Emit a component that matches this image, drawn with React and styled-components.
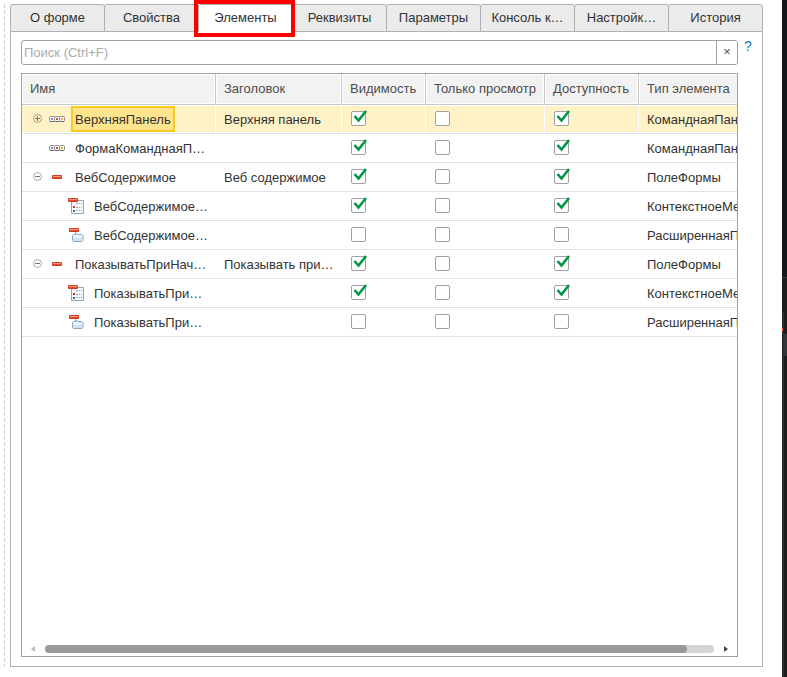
import { useState } from "react"
import styled, { createGlobalStyle } from "styled-components"

const GlobalStyle = createGlobalStyle`
    * {
        box-sizing: border-box;
    }
    body {
        margin: 0;
        background: #fff;
        color: #333;
        font-family: "Liberation Sans", Arial, sans-serif;
        font-size: 13px;
        line-height: 16px;
    }
    button, input {
        font: inherit;
        color: inherit;
    }
`

const Page = styled.div`
    display: flex;
    min-height: 100vh;
`

const Main = styled.main`
    flex: 1;
    min-width: 0;
    display: flex;
    gap: 5px;
    padding: 4px 19px 10px 4px;
`

const DashedEdge = styled.div`
    width: 1px;
    background: repeating-linear-gradient(#d0d0d0 0 4px, transparent 4px 6px);
`

const DarkEdge = styled.aside`
    width: 5px;
    display: flex;
    background: #15181a;

    svg {
        width: 5px;
        height: 100%;
    }
`

const Window = styled.div`
    flex: 1;
    min-width: 0;
    display: flex;
    flex-direction: column;
`

const Tabs = styled.div`
    display: flex;
`

const Tab = styled.button`
    position: relative;
    flex: 1;
    min-width: 0;
    height: 28px;
    padding: 0 4px;
    border: 1px solid #b0b0b0;
    border-bottom-color: ${({ $active }) => ($active ? "#fff" : "#b0b0b0")};
    border-radius: 3px 3px 0 0;
    background: ${({ $active }) => ($active ? "#fff" : "#ebebeb")};
    text-align: center;
    white-space: nowrap;
    z-index: ${({ $active }) => ($active ? 1 : 0)};

    & + & {
        margin-left: -1px;
    }
`

const Highlight = styled.span`
    position: absolute;
    inset: -5px -3px -6px -5px;
    border: 4px solid #f00;
    pointer-events: none;
`

const Panel = styled.section`
    flex: 1;
    display: flex;
    flex-direction: column;
    gap: 8px;
    padding: 8px 0 9px 10px;
    border: 1px solid #b0b0b0;
    border-top: 0;
`

const SearchRow = styled.div`
    display: flex;
`

const SearchBox = styled.div`
    flex: 1;
    display: flex;
    height: 25px;
    border: 1px solid #a0a0a0;
    border-radius: 3px;
    overflow: hidden;
`

const SearchInput = styled.input`
    flex: 1;
    min-width: 0;
    padding: 0 2px;
    border: 0;
    outline: 0;
    background: transparent;

    &::placeholder {
        color: #aaa;
        opacity: 1;
    }
`

const ClearButton = styled.button`
    width: 21px;
    padding: 0 0 2px;
    border: 0;
    border-left: 1px solid #a0a0a0;
    background: #fff;
    color: #555;
`

const Help = styled.a`
    width: 24px;
    padding-left: 6px;
    line-height: 12px;
    font-size: 14px;
    color: #0a79c0;
    text-decoration: none;
`

const Grid = styled.div`
    flex: 1;
    display: flex;
    flex-direction: column;
    justify-content: space-between;
    margin-right: 24px;
    border: 1px solid #a0a0a0;
`

const Viewport = styled.div`
    overflow: hidden;
`

const Table = styled.table`
    table-layout: fixed;
    width: 777px;
    border-spacing: 0;
`

const Head = styled.th`
    height: 31px;
    padding: 0 0 0 8px;
    border-right: 1px solid #c8c8c8;
    border-bottom: 1px solid #c8c8c8;
    background: #f2f2f2;
    box-shadow: inset 0 0 0 1px #fff;
    color: #4d4d4d;
    font-weight: normal;
    text-align: left;
    white-space: nowrap;
`

const Cell = styled.td`
    height: 29px;
    padding: 2px 0 0 8px;
    border-right: ${({ $selected }) => ($selected ? "1px solid #fff" : "0")};
    border-bottom: 1px solid #e2e2e2;
    background: ${({ $selected }) => ($selected ? "#fff2c6" : "#fff")};
    box-shadow: ${({ $selected }) => ($selected ? "inset 0 1px #fff, inset 0 -1px #fff" : "none")};
    white-space: nowrap;
`

const NameCell = styled(Cell)`
    padding-top: 0;
`

const CheckCell = styled(Cell)`
    padding: 0 0 1px 8px;
`

const TreeItem = styled.div`
    display: flex;
    align-items: center;
    padding-left: ${({ $level }) => ($level ? 22 : 3)}px;
`

const Toggle = styled.button`
    display: flex;
    align-items: flex-start;
    width: 9px;
    height: 10px;
    margin-right: 7px;
    padding: 0;
    border: 0;
    background: none;
`

const ToggleGap = styled.span`
    width: 9px;
    margin-right: 7px;
`

const Icon = styled.svg`
    display: block;
    flex: none;
    width: 16px;
    height: 16px;
    margin-right: 6px;
`

const Label = styled.span`
    height: 26px;
    padding: 3px 2px 0;
    border: 2px solid ${({ $selected }) => ($selected ? "#fbc91f" : "transparent")};
    background: ${({ $selected }) => ($selected ? "#ffe48e" : "transparent")};
    line-height: 18px;
`

const Check = styled.label`
    position: relative;
    display: block;
    width: 15px;
    height: 15px;
    margin-left: 1px;

    input {
        display: block;
        appearance: none;
        width: 15px;
        height: 15px;
        margin: 0;
        border: 1px solid #a0a0a0;
        border-radius: 2px;
        background: #fff;
    }

    svg {
        position: absolute;
        left: 2px;
        top: -2px;
        display: none;
        pointer-events: none;
    }

    input:checked + svg {
        display: block;
    }
`

const ScrollBar = styled.div`
    display: flex;
    align-items: center;
    gap: 10px;
    padding: 0 9px 3px;

    svg {
        display: block;
        width: 4px;
        height: 6px;
    }
`

const Track = styled.div`
    flex: 1;
    height: 8px;
    border-radius: 4px;
    background: #d4d4d4;
`

const Thumb = styled.div`
    width: 96%;
    height: 8px;
    border-radius: 4px;
    background: #999;
`

const tabs = ["О форме", "Свойства", "Элементы", "Реквизиты", "Параметры", "Консоль к…", "Настройк…", "История"]

const columns = [
    { title: "Имя", width: 194 },
    { title: "Заголовок", width: 126 },
    { title: "Видимость", width: 84 },
    { title: "Только просмотр", width: 119 },
    { title: "Доступность", width: 94 },
    { title: "Тип элемента", width: 160 },
]

const rows = [
    { name: "ВерхняяПанель", title: "Верхняя панель", icon: "bar", toggle: "plus", on: true, type: "КоманднаяПанель" },
    { name: "ФормаКоманднаяП…", title: "", icon: "bar", on: true, type: "КоманднаяПанель" },
    { name: "ВебСодержимое", title: "Веб содержимое", icon: "field", toggle: "minus", on: true, type: "ПолеФормы" },
    { name: "ВебСодержимое…", title: "", icon: "menu", level: 1, on: true, type: "КонтекстноеМеню" },
    { name: "ВебСодержимое…", title: "", icon: "tip", level: 1, on: false, type: "РасширеннаяПодсказка" },
    { name: "ПоказыватьПриНач…", title: "Показывать при…", icon: "field", toggle: "minus", on: true, type: "ПолеФормы" },
    { name: "ПоказыватьПри…", title: "", icon: "menu", level: 1, on: true, type: "КонтекстноеМеню" },
    { name: "ПоказыватьПри…", title: "", icon: "tip", level: 1, on: false, type: "РасширеннаяПодсказка" },
]

const RedBar = ({ x, y }) => (
    <g>
        <rect x={x} y={y} width="10" height="4" rx="1" fill="#cf3a24" />
        <rect x={x + 1} y={y + 1} width="8" height="1" fill="#ff9a80" />
        <rect x={x + 1} y={y + 2} width="8" height="1" fill="#ed4a2c" />
    </g>
)

const BarIcon = () => (
    <Icon viewBox="0 0 16 16">
        {["#5a98d8", "#ee4030", "#e0b830"].map((color, i) => (
            <g key={color}>
                <rect x={i * 5 + 0.5} y="5.5" width="5" height="5" rx="1" fill="#fff" stroke="#8b8b8b" />
                <path d={`M${i * 5 + 1} 10.5h4`} stroke="#666" />
                <rect x={i * 5 + 2} y="7" width="2" height="2" fill={color} />
            </g>
        ))}
    </Icon>
)

const FieldIcon = () => (
    <Icon viewBox="0 0 16 16">
        <RedBar x={3} y={6} />
    </Icon>
)

const MenuIcon = () => (
    <Icon viewBox="0 0 16 16">
        <path d="M3.5 2.5h12v13h-12z" fill="#f7fafc" stroke="#8ea6b6" />
        <path d="M8 5.5h2M11 5.5h1M13 5.5h1" stroke="#9aabb8" />
        <path d="M8 9.5h2M11 9.5h1M13 9.5h1" stroke="#9aabb8" />
        <path d="M8 12.5h2M11 12.5h1M13 12.5h1" stroke="#9aabb8" />
        <path d="M5 8h2v2H5z" fill="#e02c20" />
        <path d="M5 12h2v2H5z" fill="#2f6a9a" />
        <RedBar x={0} y={0} />
    </Icon>
)

const TipIcon = () => (
    <Icon viewBox="0 0 16 16">
        <path d="M5.5 7.5h2v-2l2.5 2h4l1 1v5l-1 1h-8.5l-1-1v-5z" fill="#eaf4fc" stroke="#86a8c2" />
        <path d="M5 11h9v3H5z" fill="#cfe3f2" />
        <RedBar x={1} y={1} />
    </Icon>
)

const icons = { bar: BarIcon, field: FieldIcon, menu: MenuIcon, tip: TipIcon }

const ToggleIcon = ({ plus }) => (
    <svg width="9" height="9" viewBox="0 0 9 9">
        <circle cx="4.5" cy="4.5" r="4" fill="none" stroke={plus ? "#a8a088" : "#aaa"} />
        <path d={plus ? "M2 4.5h5M4.5 2v5" : "M2 4.5h5"} stroke="#777" />
    </svg>
)

const CheckBox = ({ label, checked }) => (
    <Check>
        <input type="checkbox" aria-label={label} defaultChecked={checked} />
        <svg width="15" height="14" viewBox="0 0 15 14">
            <path d="M1.5 7L5.5 11.5L13 2" fill="none" stroke="#009646" strokeWidth="2.6" />
        </svg>
    </Check>
)

const ElementRow = ({ row, selected }) => {
    const RowIcon = icons[row.icon]
    return (
        <tr>
            <NameCell $selected={selected}>
                <TreeItem $level={row.level}>
                    {row.toggle ? (
                        <Toggle type="button" aria-label={row.name}>
                            <ToggleIcon plus={row.toggle === "plus"} />
                        </Toggle>
                    ) : (
                        <ToggleGap />
                    )}
                    <RowIcon />
                    <Label $selected={selected}>{row.name}</Label>
                </TreeItem>
            </NameCell>
            <Cell $selected={selected}>{row.title}</Cell>
            <CheckCell $selected={selected}><CheckBox label="Видимость" checked={row.on} /></CheckCell>
            <CheckCell $selected={selected}><CheckBox label="Только просмотр" checked={false} /></CheckCell>
            <CheckCell $selected={selected}><CheckBox label="Доступность" checked={row.on} /></CheckCell>
            <Cell $selected={selected}>{row.type}</Cell>
        </tr>
    )
}

const App = () => {
    const [active, setActive] = useState("Элементы")
    const [query, setQuery] = useState("")

    return (
        <Page>
            <GlobalStyle />
            <Main>
                <DashedEdge />
                <Window>
                    <Tabs role="tablist">
                        {tabs.map((tab) => (
                            <Tab
                                key={tab}
                                type="button"
                                role="tab"
                                aria-selected={tab === active}
                                $active={tab === active}
                                onClick={() => setActive(tab)}
                            >
                                {tab}
                                {tab === active && <Highlight />}
                            </Tab>
                        ))}
                    </Tabs>
                    <Panel>
                        <SearchRow>
                            <SearchBox>
                                <SearchInput
                                    aria-label="Поиск"
                                    placeholder="Поиск (Ctrl+F)"
                                    value={query}
                                    onChange={(e) => setQuery(e.target.value)}
                                />
                                <ClearButton type="button" onClick={() => setQuery("")}>×</ClearButton>
                            </SearchBox>
                            <Help href="#help">?</Help>
                        </SearchRow>
                        <Grid>
                            <Viewport>
                                <Table>
                                    <colgroup>
                                        {columns.map((col) => <col key={col.title} width={col.width} />)}
                                    </colgroup>
                                    <thead>
                                        <tr>
                                            {columns.map((col) => <Head key={col.title}>{col.title}</Head>)}
                                        </tr>
                                    </thead>
                                    <tbody>
                                        {rows.map((row, i) => <ElementRow key={i} row={row} selected={i === 0} />)}
                                    </tbody>
                                </Table>
                            </Viewport>
                            <ScrollBar>
                                <svg viewBox="0 0 4 6"><path d="M4 0v6L0 3z" fill="#bbb" /></svg>
                                <Track><Thumb /></Track>
                                <svg viewBox="0 0 4 6"><path d="M0 0v6l4-3z" fill="#444" /></svg>
                            </ScrollBar>
                        </Grid>
                    </Panel>
                </Window>
            </Main>
            <DarkEdge>
                <svg viewBox="0 0 5 677" preserveAspectRatio="none">
                    <path d="M0 278h5v399H0z" fill="#1b1d1f" />
                    <path d="M0 277h5v1H0z" fill="#333638" />
                    <path d="M1 312h1v365H1z" fill="#303335" />
                    <path d="M2 334h3v22H2z" fill="#343739" />
                    <path d="M0 328h1v3H0z" fill="#ff4a4a" />
                </svg>
            </DarkEdge>
        </Page>
    )
}

export default App
